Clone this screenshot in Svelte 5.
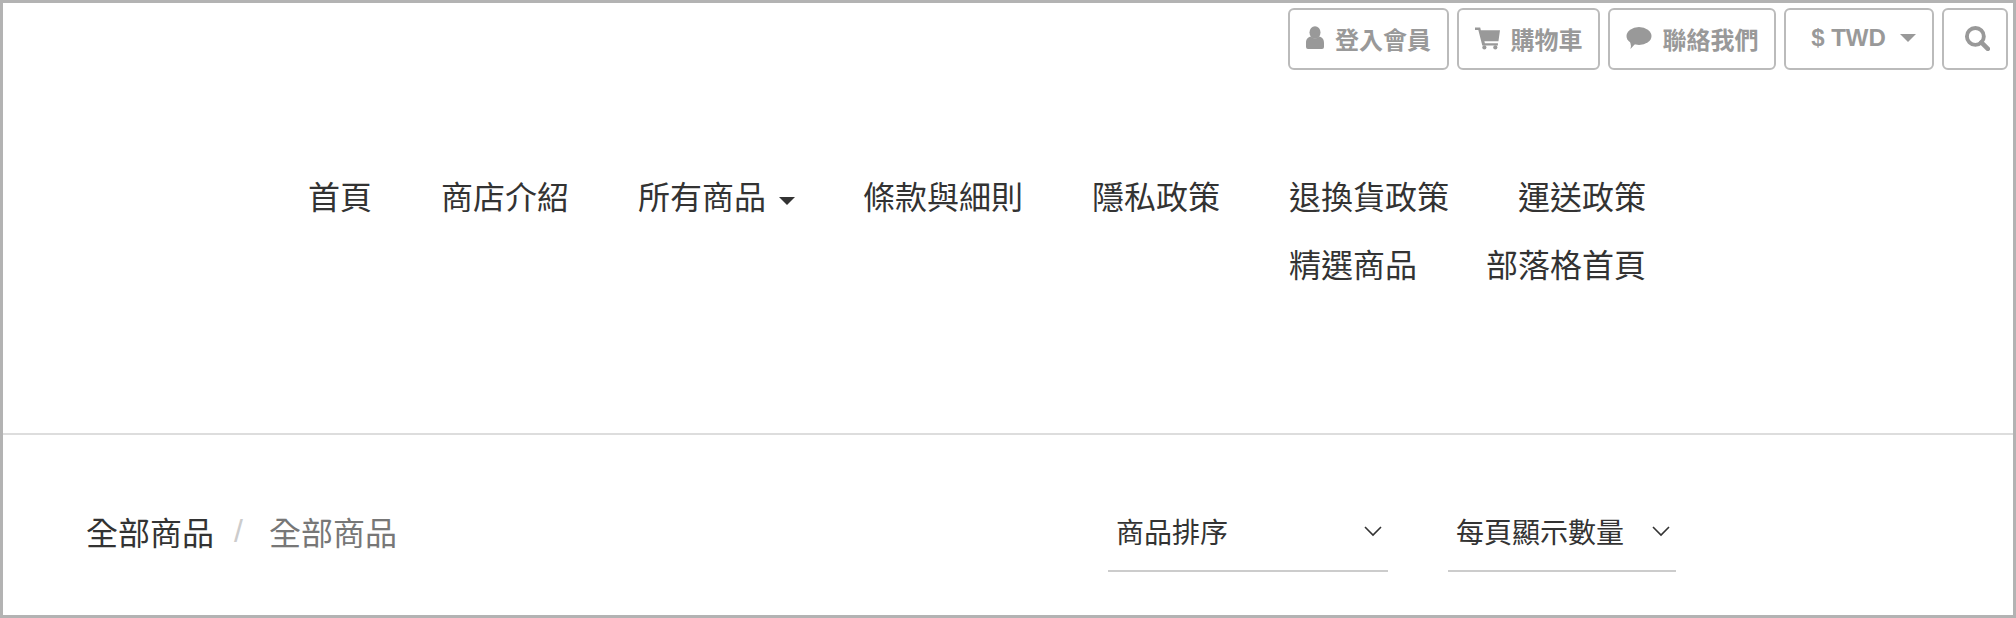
<script>
  const navRows = [
    [
      { label: '首頁' },
      { label: '商店介紹' },
      { label: '所有商品', caret: true },
      { label: '條款與細則' },
      { label: '隱私政策' },
      { label: '退換貨政策' },
      { label: '運送政策' }
    ],
    [{ label: '精選商品' }, { label: '部落格首頁' }]
  ];
</script>

<div class="page">
  <div class="topbar">
    <button class="tool login" type="button">
      <svg class="icon" width="18" height="24" viewBox="0 0 18 24" aria-hidden="true">
        <ellipse cx="9" cy="6.500" rx="5.500" ry="6.300" />
        <path d="M2 23a2 2 0 0 1-2-2v-4c0-4 2-6 5-6.500 1 1.300 2.500 2 4 2s3-.7 4-2c3 .5 5 2.500 5 6.500v4a2 2 0 0 1-2 2z" />
      </svg>
      登入會員
    </button>
    <button class="tool cart" type="button">
      <svg class="icon" width="25" height="24" viewBox="0 0 24 22" aria-hidden="true">
        <path d="M0 1h5l.6 2.500H24l-1.500 10.500H9l.5 2H22v2.300H7L3.200 3.300H0z" />
        <circle cx="9" cy="20" r="2" />
        <circle cx="19.500" cy="20" r="2" />
      </svg>
      購物車
    </button>
    <button class="tool contact" type="button">
      <svg class="icon" width="26" height="24" viewBox="0 0 26 24" aria-hidden="true">
        <ellipse cx="13" cy="10" rx="12.500" ry="9" />
        <path d="M4 15l5 3-4.500 5q1-3-.5-8z" />
      </svg>
      聯絡我們
    </button>
    <button class="tool currency" type="button">
      $ TWD
      <span class="caret tool-caret"></span>
    </button>
    <button class="tool search" type="button" aria-label="搜尋">
      <svg width="26" height="26" viewBox="0 0 24 24" aria-hidden="true">
        <circle cx="10.500" cy="10.500" r="7.800" fill="none" stroke="#999" stroke-width="3.600" />
        <path d="M16 16l6 6" stroke="#999" stroke-width="4.200" stroke-linecap="round" />
      </svg>
    </button>
  </div>

  <nav class="nav">
    {#each navRows as row}
      <div class="nav-row">
        {#each row as item}
          <span class="nav-item">
            {item.label}
            {#if item.caret}<span class="caret nav-caret"></span>{/if}
          </span>
        {/each}
      </div>
    {/each}
  </nav>

  <div class="filters">
    <div class="crumbs">
      <span>全部商品</span>
      <span class="sep">/</span>
      <span class="current">全部商品</span>
    </div>
    <div class="selects">
      <div class="select sort">
        <span>商品排序</span>
        <svg width="20" height="12" viewBox="0 0 20 12" aria-hidden="true"><path d="M2 2l8 8 8-8" fill="none" stroke="#333" stroke-width="1.600" /></svg>
      </div>
      <div class="select per-page">
        <span>每頁顯示數量</span>
        <svg width="20" height="12" viewBox="0 0 20 12" aria-hidden="true"><path d="M2 2l8 8 8-8" fill="none" stroke="#333" stroke-width="1.600" /></svg>
      </div>
    </div>
  </div>
</div>

<style>
  :global(body) {
    margin: 0;
    background: #fff;
  }

  .page {
    box-sizing: border-box;
    width: 2016px;
    height: 618px;
    border: 3px solid #b3b3b3;
    overflow: hidden;
    font-family: "Liberation Sans", "Noto Sans CJK TC", sans-serif;
    color: #333;
    background: #fff;
  }

  .topbar {
    display: flex;
    justify-content: flex-end;
    gap: 8px;
    padding: 5px 5px 0 0;
  }

  .tool {
    box-sizing: border-box;
    height: 62px;
    display: flex;
    align-items: center;
    justify-content: center;
    gap: 10px;
    padding: 0 0 2px;
    border: 2px solid #bbb;
    border-radius: 6px;
    background: #fff;
    color: #999;
    font: bold 24px "Liberation Sans", "Noto Sans CJK TC", sans-serif;
  }

  .icon {
    fill: #999;
    flex: none;
  }

  .login { width: 161px; gap: 11px; }
  .cart { width: 143px; gap: 11px; }
  .contact { width: 168px; gap: 11px; }
  .currency { width: 150px; gap: 14px; padding-left: 9px; }
  .search { width: 66px; padding-left: 4px; }

  .caret {
    display: inline-block;
    width: 0;
    height: 0;
    border-style: solid;
    border-color: currentColor transparent transparent;
  }

  .tool-caret {
    border-width: 8px 8px 0;
    margin-top: -1px;
  }

  .nav {
    margin-top: 91px;
    padding-right: 367px;
    font-size: 32px;
  }

  .nav-row {
    display: flex;
    justify-content: flex-end;
    gap: 69px;
    height: 68px;
    align-items: center;
  }

  .nav-item {
    white-space: nowrap;
  }

  .nav-caret {
    border-width: 8px 8px 0;
    margin-left: 4px;
    margin-right: -1px;
    vertical-align: 4px;
  }

  .filters {
    margin-top: 136px;
    border-top: 2px solid #ddd;
    display: flex;
    justify-content: space-between;
    padding: 0 337px 0 83px;
  }

  .crumbs {
    display: flex;
    gap: 20px;
    align-items: center;
    height: 192px;
    font-size: 32px;
  }

  .sep {
    color: #ccc;
  }

  .current {
    margin-left: 6px;
    color: #777;
  }

  .selects {
    display: flex;
    gap: 60px;
    margin-top: 62px;
  }

  .select {
    box-sizing: border-box;
    display: flex;
    justify-content: space-between;
    align-items: center;
    height: 75px;
    padding: 0 5px 5px 8px;
    border-bottom: 2px solid #ccc;
    font-size: 28px;
  }

  .sort { width: 280px; }
  .per-page { width: 228px; }
</style>
